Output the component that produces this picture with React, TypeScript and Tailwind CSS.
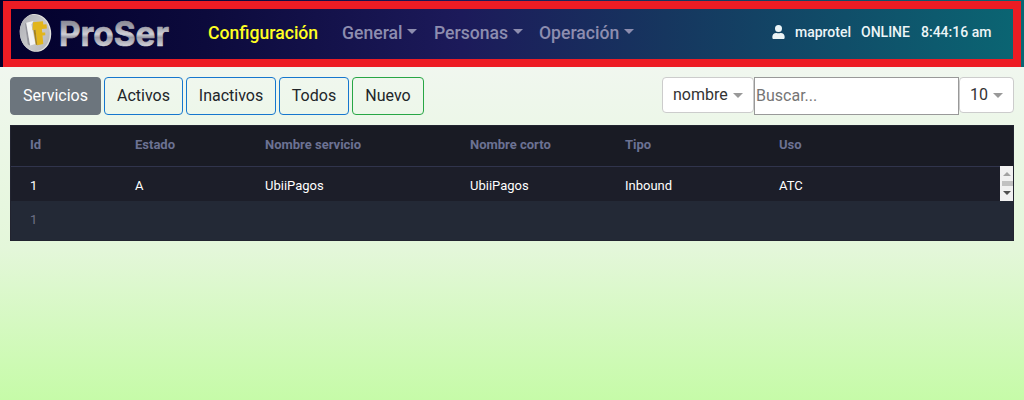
import React from "react";

const menus = [
  { label: "General", width: "w-[92px]", text: 61 },
  { label: "Personas", width: "w-[105px]", text: 75 },
  { label: "Operación", width: "w-[98px]", text: 81 },
];

const columns = ["Id", "Estado", "Nombre servicio", "Nombre corto", "Tipo", "Uso"];
const row = ["1", "A", "UbiiPagos", "UbiiPagos", "Inbound", "ATC"];
const grid = "grid grid-cols-[105px_130px_205px_155px_154px_1fr] pl-[19px]";

function Caret({ className }: { className: string }) {
  return (
    <svg viewBox="0 0 10 5" className={`h-[5px] w-[10px] shrink-0 ${className}`} fill="currentColor">
      <path d="M0 0h10L5 5z" />
    </svg>
  );
}

function Logo() {
  return (
    <svg width="160" height="44" viewBox="0 0 160 44" className="shrink-0 overflow-visible">
      <defs>
        <linearGradient id="metal" gradientUnits="userSpaceOnUse" x1="0" y1="7" x2="0" y2="35">
          <stop offset="0" stopColor="#82828e" />
          <stop offset="0.3" stopColor="#a2a2ad" />
          <stop offset="0.54" stopColor="#d0d0d6" />
          <stop offset="0.66" stopColor="#9a9aa6" />
          <stop offset="1" stopColor="#d6d6dc" />
        </linearGradient>
        <linearGradient id="disc" x1="0" y1="0" x2="1" y2="1">
          <stop offset="0" stopColor="#acadb4" />
          <stop offset="0.55" stopColor="#c9c9cb" />
          <stop offset="1" stopColor="#b2b2b5" />
        </linearGradient>
      </defs>
      <g transform="rotate(-8 20 21)">
        <ellipse cx="20.5" cy="21" rx="15.7" ry="19" fill="#e2e2dd" />
        <ellipse cx="19.8" cy="20.8" rx="15" ry="18.2" fill="url(#disc)" />
      </g>
      <path d="M11.2 10.8l-1.2 1 2.8 20.5 2.2 1.2z" fill="#94949c" />
      <path d="M11.2 10.8l7.3-1.8-2.1 3.5 4 19.5-5.2 1.6z" fill="#f3f3f3" />
      <path d="M18 10.2l10-1 .3 3.3 3.2-.2.4 4.2-5 .6.3 3.5 3-.2.1 2.8-2.8.4.8 8.4-6 1.2-1.7-15.5-3.1.3z" fill="#e2b51c" />
      <path d="M20.6 17.7l1.7 15.5-1.5-.6-2.3-14.7z" fill="#a98418" />
      <text x="44" y="33.5" textLength="110" lengthAdjust="spacingAndGlyphs" fontFamily="Inter, sans-serif" fontWeight="700" fontSize="34.5" fill="url(#metal)" stroke="url(#metal)" strokeWidth="0.7" strokeLinejoin="round">
        ProSer
      </text>
    </svg>
  );
}

function FilterButton({ label, style }: { label: string; style: string }) {
  return (
    <button className={`h-[38px] rounded border text-center text-[16px] leading-6 ${style}`}>{label}</button>
  );
}

export default function App() {
  return (
    <div className="h-[400px] w-[1024px] overflow-hidden bg-[linear-gradient(#f5f7f7,#e4f7da_62%,#c6fba8)] font-['Roboto',sans-serif]">
      <header className="h-[67px] bg-[linear-gradient(90deg,#02002c_0%,#0c0a3c_20%,#1c1a5a_45%,#16365f_65%,#0a6673_100%)] pt-px pr-[3px] pl-[3px]">
        <div className="flex h-[66px] items-center border-8 border-[#ed1c24] pl-[4px]">
          <Logo />
          <nav className="-mt-[2px] ml-[33px] flex items-center text-[17.6px] font-medium leading-6 text-[#8d8daf]">
            <a className="w-[134px] text-[#ffff22]">Configuración</a>
            {menus.map((menu) => (
              <a key={menu.label} className={`flex items-center whitespace-nowrap ${menu.width}`}>
                <span style={{ width: menu.text }}>{menu.label}</span>
                <Caret className="ml-[4px] -mt-[3px]" />
              </a>
            ))}
          </nav>
          <div className="-mt-[4px] mr-[21px] ml-auto flex items-center text-[14px] font-medium leading-5 text-[#edf5f7]">
            <svg viewBox="0 0 448 512" className="mr-[10px] h-[14px] w-[13px]" fill="currentColor">
              <path d="M224 256a128 128 0 1 0 0-256 128 128 0 1 0 0 256m90 32h-17a174 174 0 0 1-146 0h-17C60 288 0 348 0 422v42c0 27 21 48 48 48h352c27 0 48-21 48-48v-42c0-74-60-134-134-134" />
            </svg>
            <span className="mr-[10px]">maprotel</span>
            <span className="mr-[10px] w-[50px]">ONLINE</span>
            <span className="w-[71px] whitespace-nowrap">8:44:16 am</span>
          </div>
        </div>
      </header>

      <main className="px-[10px] pt-[10px]">
        <div className="flex h-[48px] items-start justify-between">
          <div className="flex gap-[3px] text-[#212529]">
            <FilterButton label="Servicios" style="w-[91px] border-[#6c757d] bg-[#6c757d] text-white" />
            <FilterButton label="Activos" style="w-[79px] border-[#1677ce]" />
            <FilterButton label="Inactivos" style="w-[90px] border-[#1677ce]" />
            <FilterButton label="Todos" style="w-[70px] border-[#1677ce]" />
            <FilterButton label="Nuevo" style="w-[72px] border-[#28a745]" />
          </div>
          <div className="flex items-start text-[16px] text-[#333]">
            <button className="flex h-[36px] w-[92px] items-center rounded border border-[#ccc] bg-white pl-[10px]">
              <span className="w-[60px] text-left">nombre</span>
              <Caret className="text-[#999]" />
            </button>
            <input
              className="h-[38px] w-[205px] border border-[#999] bg-white px-[1px] pb-[2px] placeholder:text-[#757575]"
              placeholder="Buscar..."
            />
            <button className="flex h-[36px] w-[55px] items-center rounded border border-[#ccc] bg-white pl-[10px]">
              <span className="w-[23px] text-left">10</span>
              <Caret className="text-[#999]" />
            </button>
          </div>
        </div>

        <section className="h-[116px] border border-[#222430] bg-[#232936] text-[13px] leading-5">
          <div className={`${grid} h-[41px] border-b border-[#30344c] bg-[#191b24] pt-[9px] font-bold text-[#6c7293]`}>
            {columns.map((name) => (
              <span key={name}>{name}</span>
            ))}
          </div>
          <div className="flex h-[34px] bg-[#1c1e29]">
            <div className={`${grid} flex-1 pt-[9px] text-white`}>
              {row.map((value, i) => (
                <span key={i}>{value}</span>
              ))}
            </div>
            <div className="-mt-px flex h-[35px] w-[13px] flex-col items-center bg-[#f1f1f1]">
              <svg viewBox="0 0 13 15" className="h-[15px] w-[13px]">
                <path d="M3 10h8L7 6z" fill="#a3a3a3" />
              </svg>
              <div className="h-[5px] w-[11px] self-end bg-[#c1c1c1]" />
              <svg viewBox="0 0 13 15" className="h-[15px] w-[13px]">
                <path d="M3 5h8L7 9z" fill="#505050" />
              </svg>
            </div>
          </div>
          <div className="h-[39px] pt-[9px] pl-[19px] text-[#6e7186]">1</div>
        </section>
      </main>
    </div>
  );
}
